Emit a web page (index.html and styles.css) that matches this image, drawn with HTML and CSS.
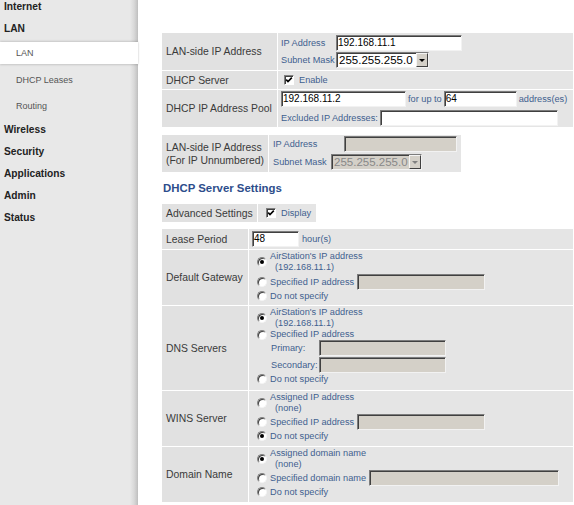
FILE: index.html
```html
<!DOCTYPE html>
<html>
<head>
<meta charset="utf-8">
<title>LAN</title>
<link rel="stylesheet" href="styles.css">
</head>
<body>
<div class="page">
  <nav class="side">
    <div class="top first">Internet</div>
    <div class="top">LAN</div>
    <div class="sub sel">LAN</div>
    <div class="sub dh">DHCP Leases</div>
    <div class="sub">Routing</div>
    <div class="top">Wireless</div>
    <div class="top">Security</div>
    <div class="top">Applications</div>
    <div class="top">Admin</div>
    <div class="top">Status</div>
  </nav>
  <main class="main">
    <table class="form t1">
      <colgroup><col class="c1"><col></colgroup>
      <tr class="h37">
        <td class="lbl"><div class="lt">LAN-side IP Address</div></td>
        <td class="val">
          <div class="pair">
            <span class="sm">IP Address</span><span class="field w126">192.168.11.1</span>
            <span class="sm">Subnet Mask</span><span class="select w93"><span>255.255.255.0</span><span class="btn"></span></span>
          </div>
        </td>
      </tr>
      <tr class="h18">
        <td class="lbl"><div class="lt">DHCP Server</div></td>
        <td class="val mid">
          <div class="chkline p6"><span class="check"><svg viewBox="0 0 8 8" width="8" height="8"><path d="M1.2 3.6 L3 5.6 L6.8 1.6" stroke="#000" stroke-width="1.6" fill="none"/></svg></span><span class="sm cl">Enable</span></div>
        </td>
      </tr>
      <tr class="h37">
        <td class="lbl"><div class="lt">DHCP IP Address Pool</div></td>
        <td class="val">
          <div class="pool">
            <div class="line16"><span class="field w125">192.168.11.2</span><span class="sm mx2">for up to</span><span class="field w73">64</span><span class="sm ml2">address(es)</span></div>
            <div class="line16 mt3"><span class="sm">Excluded IP Addresses:</span><span class="field w178 ml2"></span></div>
          </div>
        </td>
      </tr>
    </table>

    <table class="form t2">
      <colgroup><col class="c1"><col></colgroup>
      <tr class="h37">
        <td class="lbl"><div class="lt two">LAN-side IP Address<br>(For IP Unnumbered)</div></td>
        <td class="val">
          <div class="unnum">
            <div class="line16"><span class="sm lw71">IP Address</span><span class="field dis w113"></span></div>
            <div class="line16 mt2"><span class="sm lw58">Subnet Mask</span><span class="select dis w91"><span>255.255.255.0</span><span class="btn"></span></span></div>
          </div>
        </td>
      </tr>
    </table>

    <h2 class="head">DHCP Server Settings</h2>

    <table class="form t3">
      <colgroup><col class="c1"><col></colgroup>
      <tr class="h18">
        <td class="lbl"><div class="lt">Advanced Settings</div></td>
        <td class="val mid">
          <div class="chkline p8"><span class="check"><svg viewBox="0 0 8 8" width="8" height="8"><path d="M1.2 3.6 L3 5.6 L6.8 1.6" stroke="#000" stroke-width="1.6" fill="none"/></svg></span><span class="sm cl">Display</span></div>
        </td>
      </tr>
    </table>

    <table class="form t4">
      <colgroup><col class="c1"><col></colgroup>
      <tr class="h20">
        <td class="lbl"><div class="lt">Lease Period</div></td>
        <td class="val mid">
          <div class="line16 p3"><span class="field w47">48</span><span class="sm ml3">hour(s)</span></div>
        </td>
      </tr>
      <tr class="h55">
        <td class="lbl"><div class="lt">Default Gateway</div></td>
        <td class="val">
          <div class="opts">
            <div class="opt o1"><span class="radio on"></span><span class="sm txt">AirStation's IP address<br><span class="ind">(192.168.11.1)</span></span></div>
            <div class="opt o2 mt1"><span class="radio"></span><span class="sm txt">Specified IP address</span><span class="field dis w128 ml3"></span></div>
            <div class="opt o3"><span class="radio"></span><span class="sm txt">Do not specify</span></div>
          </div>
        </td>
      </tr>
      <tr class="h84">
        <td class="lbl"><div class="lt">DNS Servers</div></td>
        <td class="val">
          <div class="opts">
            <div class="opt o1"><span class="radio on"></span><span class="sm txt">AirStation's IP address<br><span class="ind">(192.168.11.1)</span></span></div>
            <div class="opt o11"><span class="radio"></span><span class="sm txt">Specified IP address</span></div>
            <div class="srv"><span class="sm lw48">Primary:</span><span class="field dis w127"></span></div>
            <div class="srv mt1"><span class="sm lw48">Secondary:</span><span class="field dis w127"></span></div>
            <div class="opt o3"><span class="radio"></span><span class="sm txt">Do not specify</span></div>
          </div>
        </td>
      </tr>
      <tr class="h55">
        <td class="lbl"><div class="lt">WINS Server</div></td>
        <td class="val">
          <div class="opts">
            <div class="opt o1"><span class="radio"></span><span class="sm txt">Assigned IP address<br><span class="ind">(none)</span></span></div>
            <div class="opt o2"><span class="radio"></span><span class="sm txt">Specified IP address</span><span class="field dis w128 ml3"></span></div>
            <div class="opt o3"><span class="radio on"></span><span class="sm txt">Do not specify</span></div>
          </div>
        </td>
      </tr>
      <tr class="h55">
        <td class="lbl"><div class="lt">Domain Name</div></td>
        <td class="val">
          <div class="opts">
            <div class="opt o1"><span class="radio on"></span><span class="sm txt">Assigned domain name<br><span class="ind">(none)</span></span></div>
            <div class="opt o2"><span class="radio"></span><span class="sm txt">Specified domain name</span><span class="field dis w190 ml3"></span></div>
            <div class="opt o3"><span class="radio"></span><span class="sm txt">Do not specify</span></div>
          </div>
        </td>
      </tr>
    </table>
  </main>
</div>
</body>
</html>
```

FILE: styles.css
```css
* { box-sizing: border-box; }
html, body { margin: 0; padding: 0; background: #fff; }
body {
  font-family: "Liberation Sans", Arial, sans-serif;
  color: #3a3a3a;
  width: 574px;
  height: 505px;
  overflow: hidden;
}
.page { display: flex; height: 505px; }

/* sidebar */
.side {
  width: 138px;
  flex: none;
  background: linear-gradient(to right, #e8e8e8 0, #e8e8e8 130px, #d9d9d9 134px, #c6c6c6 137px, #bdbdbd 138px);
}
.top {
  font-weight: bold;
  font-size: 10.2px;
  line-height: 22px;
  height: 22px;
  padding-left: 4px;
  color: #222;
}
.first { margin-top: -4px; }
.sub {
  font-size: 9px;
  padding-left: 16px;
  color: #555;
  height: 26px;
  line-height: 26px;
}
.sel {
  background: #fff;
  height: 22px;
  line-height: 22px;
  margin-top: 2px;
  box-shadow: 0 -1px 2px rgba(0,0,0,0.14), 0 1px 2px rgba(0,0,0,0.14);
  position: relative;
}
.dh { margin-top: 3px; }

/* main */
.main { flex: 1; padding: 32px 0 0 23px; }
table.form { border-collapse: separate; border-spacing: 1px; table-layout: fixed; }
table.form td { padding: 0; }
.t1 { width: 413px; }
.t1 .c1 { width: 115px; }
.t2 { width: 301px; margin-top: 6px; }
.t2 .c1 { width: 106px; }
.t3 { width: 156px; }
.t3 .c1 { width: 95px; }
.t4 { width: 413px; margin-top: 5px; }
.t4 .c1 { width: 86px; }

.h18 td { height: 18px; }
.h20 td { height: 20px; }
.h37 td { height: 37px; }
.h55 td { height: 55px; }
.h84 td { height: 84px; }

.lbl { background: #e1e1e1; vertical-align: middle; }
.lt { font-size: 10.4px; padding-left: 4px; white-space: nowrap; color: #3a3a3a; }
.lt.two { line-height: 13px; }
.val { background: #e5e5e5; vertical-align: top; }
.val.mid { vertical-align: middle; }

.sm { font-size: 9.2px; color: #3f5f8f; white-space: nowrap; }

.pair {
  display: grid;
  grid-template-columns: 55px auto;
  grid-auto-rows: 16px;
  row-gap: 1px;
  align-items: center;
  justify-content: start;
  padding: 2px 0 0 3px;
}
.chkline { display: flex; align-items: center; }
.p6 { padding-left: 6px; }
.p8 { padding-left: 8px; }
.p3 { padding-left: 3px; }
.cl { margin-left: 5px; }

.pool { padding: 1px 0 0 3px; }
.unnum { padding: 1px 0 0 4px; }
.line16 { display: flex; align-items: center; height: 16px; }
.mt1 { margin-top: 1px; }
.mt2 { margin-top: 2px; }
.mt3 { margin-top: 3px; }
.ml2 { margin-left: 2px; }
.ml3 { margin-left: 3px; }
.mx2 { margin: 0 2px; }
.lw71 { width: 71px; flex: none; }
.lw58 { width: 58px; flex: none; }
.lw48 { width: 48px; flex: none; }

/* form controls */
.field {
  display: inline-block;
  flex: none;
  height: 16px;
  border: 1px solid;
  border-color: #7c7c7c #f2f2f2 #f2f2f2 #7c7c7c;
  box-shadow: inset 1px 1px 0 #404040;
  background: #fff;
  font-size: 10px;
  line-height: 14px;
  padding-left: 1px;
  color: #000;
  overflow: hidden;
  white-space: nowrap;
}
.field.dis { background: #d4d0c8; }
.w47 { width: 47px; }
.w73 { width: 73px; }
.w113 { width: 113px; }
.w125 { width: 125px; }
.w126 { width: 126px; }
.w127 { width: 127px; }
.w128 { width: 128px; }
.w178 { width: 178px; }
.w190 { width: 190px; }
.w91 { width: 91px; }
.w93 { width: 93px; }

.select {
  display: inline-flex;
  flex: none;
  align-items: center;
  justify-content: space-between;
  height: 16px;
  border: 1px solid;
  border-color: #7c7c7c #f2f2f2 #f2f2f2 #7c7c7c;
  box-shadow: inset 1px 1px 0 #404040;
  background: #fff;
  font-size: 11.5px;
  line-height: 14px;
  padding-left: 2px;
  color: #000;
  white-space: nowrap;
}
.select.dis { background: #d4d0c8; color: #888; }
.btn {
  width: 12px;
  height: 14px;
  flex: none;
  background: #d4d0c8;
  border: 1px solid;
  border-color: #f4f4f4 #404040 #404040 #f4f4f4;
  position: relative;
}
.btn::after {
  content: "";
  position: absolute;
  left: 2px;
  top: 5px;
  border-left: 3px solid transparent;
  border-right: 3px solid transparent;
  border-top: 3px solid #000;
}
.select.dis .btn::after { border-top-color: #808080; }

.check {
  width: 10px;
  height: 10px;
  flex: none;
  display: inline-flex;
  align-items: center;
  justify-content: center;
  background: #fff;
  border: 1px solid;
  border-color: #808080 #fff #fff #808080;
  box-shadow: inset 1px 1px 0 #404040;
}
.check svg { display: block; }

.radio {
  width: 10px;
  height: 10px;
  flex: none;
  border-radius: 50%;
  background: #fff;
  border: 1px solid;
  border-color: #808080 #f4f4f4 #f4f4f4 #808080;
  box-shadow: inset 1px 1px 0 #404040;
  position: relative;
}
.radio.on::after {
  content: "";
  position: absolute;
  left: 2px;
  top: 2px;
  width: 4px;
  height: 4px;
  border-radius: 50%;
  background: #000;
}

.opts { padding-top: 1px; }
.opt { display: flex; align-items: center; padding-left: 8px; }
.opt .txt { margin-left: 3px; line-height: 11px; }
.o1 { height: 22px; }
.o11 { height: 11px; }
.o2 { height: 16px; }
.o3 { height: 12px; }
.ind { padding-left: 5px; }
.srv { display: flex; align-items: center; height: 16px; padding-left: 22px; }

.head {
  font-size: 11.4px;
  font-weight: bold;
  color: #2d4d8b;
  line-height: 16px;
  margin: 7px 0 7px 2px;
}
```
